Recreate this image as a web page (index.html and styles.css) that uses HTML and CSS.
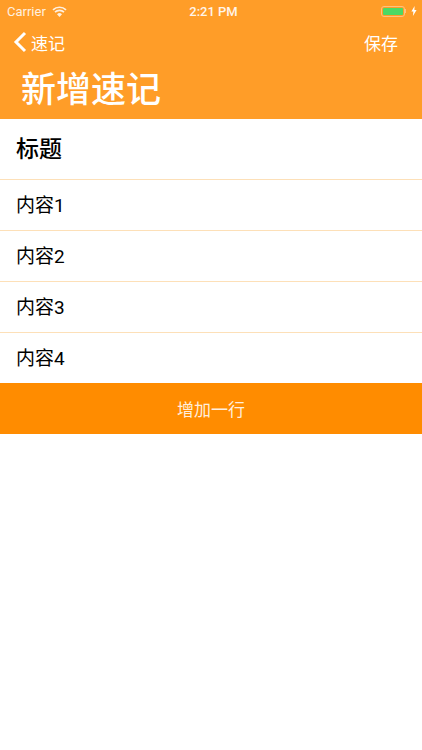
FILE: index.html
```html
<!DOCTYPE html>
<html lang="zh-CN">
<head>
    <meta charset="UTF-8">
    <meta name="viewport" content="width=device-width, initial-scale=1.0">
    <title>新增速记</title>
    <link rel="stylesheet" href="styles.css">
</head>
<body>
    <div class="header">
        <div class="status-bar">
            <div class="status-left">
                <span>Carrier</span>
                <svg class="wifi" width="15" height="11" viewBox="0 0 15 11">
                    <path d="M7.5 11 5 8.3a3.5 3.5 0 0 1 5 0Z" fill="#fff"/>
                    <path d="M1 3.9a9.3 9.3 0 0 1 13 0M3 6.1a6.5 6.5 0 0 1 9 0" fill="none" stroke="#fff" stroke-width="1.7"/>
                </svg>
            </div>
            <div class="status-time">2:21 PM</div>
            <div class="status-right">
                <div class="battery"><div class="battery-level"></div></div>
                <div class="battery-tip"></div>
                <svg class="bolt" width="6" height="10" viewBox="0 0 6 10">
                    <path d="M3.6 0 .4 5.6h2L1.9 10 5.6 4.1H3.4Z" fill="#fff"/>
                </svg>
            </div>
        </div>
        <div class="nav-bar">
            <a class="back">
                <svg width="14" height="22" viewBox="0 0 14 22">
                    <path d="M12 2 3 11l9 9" fill="none" stroke="#fff" stroke-width="3"/>
                </svg>
                <span>速记</span>
            </a>
            <a class="save">保存</a>
        </div>
        <h1 class="page-title">新增速记</h1>
    </div>
    <div class="row row-title">标题</div>
    <div class="row">内容1</div>
    <div class="row">内容2</div>
    <div class="row">内容3</div>
    <div class="row row-last">内容4</div>
    <button class="add-btn">增加一行</button>
</body>
</html>
```

FILE: styles.css
```css
* {
    margin: 0;
    padding: 0;
    box-sizing: border-box;
}
body {
    font-family: "Roboto", "Noto Sans CJK SC", sans-serif;
    background-color: white;
    color: black;
}
.header {
    height: 119px;
    background-color: #ff9d28;
    color: white;
}
.status-bar {
    height: 22px;
    padding: 0 5px 0 7px;
    display: grid;
    grid-template-columns: 1fr auto 1fr;
    align-items: center;
    font-size: 13px;
}
.status-left {
    display: flex;
    align-items: center;
    gap: 6px;
    opacity: 0.85;
}
.status-time {
    font-weight: 500;
    font-size: 13px;
    opacity: 0.9;
    padding-left: 3px;
}
.status-right {
    display: flex;
    align-items: center;
    justify-content: flex-end;
}
.battery {
    width: 24px;
    height: 11px;
    border: 1px solid #ffc27d;
    border-radius: 3px;
    padding: 1px;
}
.battery-level {
    height: 100%;
    background-color: #4cd964;
    border-radius: 1px;
}
.battery-tip {
    width: 1px;
    height: 4px;
    background-color: #ffc27d;
    margin-right: 5px;
}
.nav-bar {
    height: 42px;
    padding: 0 24px 2px 13px;
    display: flex;
    justify-content: space-between;
    align-items: center;
    font-size: 17px;
}
.back {
    display: flex;
    align-items: center;
    gap: 4px;
}
.page-title {
    font-size: 35px;
    font-weight: 500;
    line-height: 50px;
    padding-left: 21px;
    padding-top: 2px;
}
.row {
    height: 51px;
    padding: 0 0 4px 16px;
    display: flex;
    align-items: center;
    font-size: 19px;
    border-bottom: 1px solid #fde0b8;
}
.row-title {
    height: 61px;
    font-size: 23px;
    font-weight: 500;
}
.row-last {
    height: 50px;
    border-bottom: none;
}
.add-btn {
    display: block;
    width: 100%;
    height: 51px;
    background-color: #ff8c00;
    color: #ffeedd;
    border: none;
    font-family: inherit;
    font-size: 17px;
}
```
